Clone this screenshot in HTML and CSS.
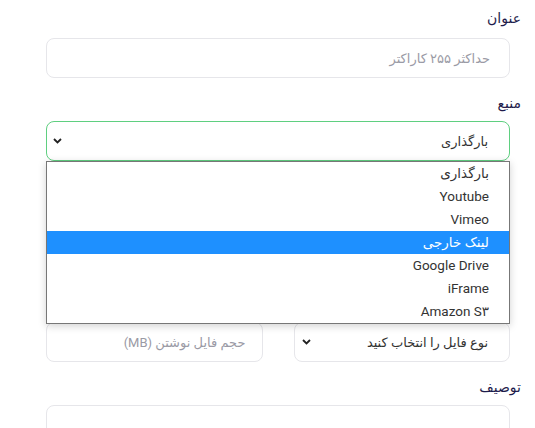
FILE: index.html
```html
<!DOCTYPE html>
<html lang="fa" dir="rtl">
<head>
<meta charset="utf-8">
<link rel="stylesheet" href="styles.css">
</head>
<body>
<div class="form">
  <div class="field first">
    <label class="label">عنوان</label>
    <div class="control input"><span class="placeholder">حداکثر ۲۵۵ کاراکتر</span></div>
  </div>
  <div class="field">
    <label class="label">منبع</label>
    <div class="select-wrap">
      <div class="control select active">
        <span class="value">بارگذاری</span>
        <svg class="chev" width="9" height="6" viewBox="0 0 9 6"><path d="M1 1l3.5 3.5L8 1" fill="none" stroke="#222" stroke-width="1.8"/></svg>
      </div>
      <ul class="dropdown">
        <li>بارگذاری</li>
        <li>Youtube</li>
        <li>Vimeo</li>
        <li class="hl">لینک خارجی</li>
        <li>Google Drive</li>
        <li>iFrame</li>
        <li>Amazon S۳</li>
      </ul>
    </div>
  </div>
  <div class="row">
    <div class="col">
      <div class="control select">
        <span class="value">نوع فایل را انتخاب کنید</span>
        <svg class="chev" width="9" height="6" viewBox="0 0 9 6"><path d="M1 1l3.5 3.5L8 1" fill="none" stroke="#222" stroke-width="1.8"/></svg>
      </div>
    </div>
    <div class="col">
      <div class="control input small"><span class="placeholder">حجم فایل نوشتن (MB)</span></div>
    </div>
  </div>
  <div class="field">
    <label class="label">توصیف</label>
    <div class="control textarea"></div>
  </div>
</div>
</body>
</html>
```
FILE: styles.css
```css
* { box-sizing: border-box; }
html, body { margin: 0; padding: 0; background: #fff; }
body {
  font-family: Roboto, "DejaVu Sans", sans-serif;
  font-size: 13px;
  color: #333;
  width: 535px;
  height: 428px;
  overflow: hidden;
}
.form {
  padding: 8px 14px 0 25px;
}
.field { margin-top: 15px; }
.field.first { margin-top: 0; }
.label {
  display: block;
  height: 20px;
  line-height: 20px;
  font-size: 14px;
  color: #1e1b4b;
  margin-bottom: 8px;
}
.first .label { margin-bottom: 10px; }
.control {
  margin-right: 11px;
  margin-left: 21px;
  height: 40px;
  border: 1px solid #e6e6ea;
  border-radius: 8px;
  display: flex;
  align-items: center;
  padding: 0 19px 0 6px;
  background: #fff;
}
.select { padding-right: 21px; }
.input.small { padding-right: 16px; }
.placeholder { color: #9a9aa5; }
.value { color: #333; flex: 1; }
.select.active { border-color: #5fcf80; }
.select-wrap { position: relative; }
.chev { flex: none; }
.dropdown {
  position: absolute;
  top: 40px;
  right: 11px;
  left: 21px;
  margin: 0;
  padding: 0;
  list-style: none;
  background: #fff;
  border: 1px solid #777;
  box-shadow: 0 2px 8px rgba(0,0,0,0.18);
  z-index: 5;
}
.dropdown li {
  height: 23px;
  line-height: 23px;
  padding-right: 20px;
  font-size: 13.5px;
  color: #333;
}
.dropdown li.hl { background: #1e90ff; color: #fff; }
.row {
  display: flex;
  gap: 31px;
  margin: 161px 11px 0 21px;
}
.col { flex: 1; }
.row .control { margin: 0; }
.row .select { padding-left: 7px; }
.textarea { height: 80px; }
```
